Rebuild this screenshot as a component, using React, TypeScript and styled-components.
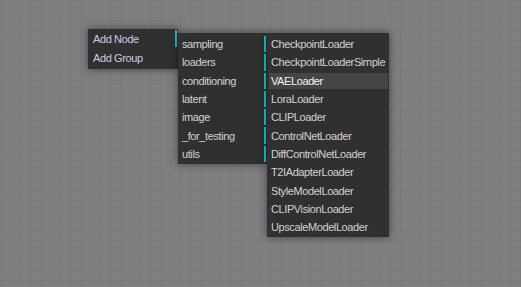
import React from "react";
import styled, { createGlobalStyle } from "styled-components";

const GlobalStyle = createGlobalStyle`
  html, body {
    margin: 0;
    padding: 0;
    width: 100%;
    height: 100%;
    overflow: hidden;
  }
  body {
    background-color: #7f7f7f;
    background-image:
      linear-gradient(to right, rgba(0, 0, 0, 0.045) 1px, transparent 1px),
      linear-gradient(to bottom, rgba(0, 0, 0, 0.045) 1px, transparent 1px);
    background-size: 10px 10px;
    font-family: "Liberation Sans", Arial, sans-serif;
  }
`;

const Canvas = styled.div`
  position: relative;
  width: 521px;
  height: 287px;
`;

const Menu = styled.div<{ $left: number; $top: number; $width: number }>`
  position: absolute;
  left: ${({ $left }) => $left}px;
  top: ${({ $top }) => $top}px;
  width: ${({ $width }) => $width}px;
  box-sizing: border-box;
  display: flex;
  flex-direction: column;
  gap: 2px;
  padding: 3px 1px 2px 2px;
  background-color: #303030;
  box-shadow: 0 0 8px rgba(0, 0, 0, 0.5);
`;

const Entry = styled.div<{ $submenu?: boolean; $hover?: boolean; $accent?: boolean }>`
  height: 16.3px;
  box-sizing: border-box;
  display: flex;
  align-items: center;
  padding-left: 2px;
  font-size: 11px;
  letter-spacing: -0.4px;
  white-space: nowrap;
  color: ${({ $hover, $accent }) => ($hover ? "#f4f4f4" : $accent ? "#c9cde2" : "#d2d2d2")};
  background-color: ${({ $hover }) => ($hover ? "#454545" : "transparent")};
  border-right: 2px solid ${({ $submenu }) => ($submenu ? "#14cccc" : "transparent")};
`;

const MainMenu = styled(Menu)`
  gap: 2.5px;
  padding-top: 1px;
  padding-bottom: 2px;
`;

const MainEntry = styled(Entry)`
  height: 17px;
  padding-left: 3px;
`;

const categories = [
  "sampling",
  "loaders",
  "conditioning",
  "latent",
  "image",
  "_for_testing",
  "utils",
];

const loaders = [
  "CheckpointLoader",
  "CheckpointLoaderSimple",
  "VAELoader",
  "LoraLoader",
  "CLIPLoader",
  "ControlNetLoader",
  "DiffControlNetLoader",
  "T2IAdapterLoader",
  "StyleModelLoader",
  "CLIPVisionLoader",
  "UpscaleModelLoader",
];

export default function App() {
  return (
    <>
      <GlobalStyle />
      <Canvas>
        <MainMenu $left={88} $top={29} $width={90}>
          <MainEntry $submenu $accent>Add Node</MainEntry>
          <MainEntry $accent>Add Group</MainEntry>
        </MainMenu>
        <Menu $left={178} $top={33} $width={89}>
          {categories.map((c) => (
            <Entry key={c} $submenu>
              {c}
            </Entry>
          ))}
        </Menu>
        <Menu $left={267} $top={33} $width={122}>
          {loaders.map((l) => (
            <Entry key={l} $hover={l === "VAELoader"}>
              {l}
            </Entry>
          ))}
        </Menu>
      </Canvas>
    </>
  );
}
